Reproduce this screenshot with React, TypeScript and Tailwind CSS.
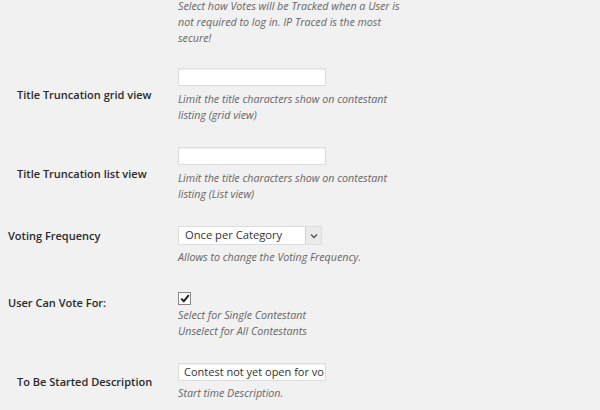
import React from 'react';

const font = { fontFamily: '"Open Sans", "Liberation Sans", sans-serif' };

const Desc = ({ children }: { children: React.ReactNode }) => (
  <p className="text-[10.7px] leading-[16px] italic text-[#666]">{children}</p>
);

const TextInput = ({ value = '' }: { value?: string }) => (
  <div className="w-[148px] h-[18px] bg-white border border-[#dddddd] shadow-[inset_0_1px_2px_rgba(0,0,0,0.07)] flex items-center pl-[5px] text-[11px] text-[#333] overflow-hidden whitespace-nowrap">
    {value}
  </div>
);

const App = () => {
  return (
    <div className="w-[600px] h-[410px] bg-[#f1f1f1] overflow-hidden" style={font}>
      {/* tracking description, cut off at the top */}
      <div className="pl-[178px] mt-[-2px]">
        <Desc>
          Select how Votes will be Tracked when a User is
          <br />
          not required to log in. IP Traced is the most
          <br />
          secure!
        </Desc>
      </div>

      {/* Title truncation grid */}
      <div className="flex items-center mt-[22px]">
        <div className="w-[178px] pl-[17px] text-[11px] font-semibold text-[#2a2a2a]">Title Truncation grid view</div>
        <div className="flex flex-col gap-[5px]">
          <TextInput />
          <Desc>
            Limit the title characters show on contestant
            <br />
            listing (grid view)
          </Desc>
        </div>
      </div>

      {/* Title truncation list */}
      <div className="flex items-center mt-[24px]">
        <div className="w-[178px] pl-[17px] text-[11px] font-semibold text-[#2a2a2a]">Title Truncation list view</div>
        <div className="flex flex-col gap-[5px]">
          <TextInput />
          <Desc>
            Limit the title characters show on contestant
            <br />
            listing (List view)
          </Desc>
        </div>
      </div>

      {/* Voting frequency */}
      <div className="flex items-start mt-[24px]">
        <div className="w-[178px] pl-[8px] pt-[2px] text-[11px] leading-[16px] font-semibold text-[#2a2a2a]">Voting Frequency</div>
        <div className="flex flex-col gap-[4px]">
          <div className="w-[144px] h-[19px] bg-white border border-[#dddddd] flex items-stretch">
            <span className="flex-1 flex items-center pl-[6px] text-[11.2px] text-[#333]">Once per Category</span>
            <span className="w-[16px] bg-[#eaeaea] border-l border-[#cfcfcf] flex items-center justify-center">
              <svg width="8" height="6" viewBox="0 0 8 6">
                <path d="M1 1.5 L4 4.5 L7 1.5" fill="none" stroke="#555" strokeWidth="1.4" />
              </svg>
            </span>
          </div>
          <Desc>Allows to change the Voting Frequency.</Desc>
        </div>
      </div>

      {/* User can vote for */}
      <div className="flex items-start mt-[27px]">
        <div className="w-[178px] pl-[8px] pt-[3px] text-[11px] leading-[16px] font-semibold text-[#2a2a2a]">User Can Vote For:</div>
        <div className="flex flex-col gap-[2px]">
          <div className="w-[13px] h-[13px] bg-white border border-[#888] flex items-center justify-center">
            <svg width="10" height="9" viewBox="0 0 10 9">
              <path d="M1.2 4.6 L3.8 7.2 L8.8 1.2" fill="none" stroke="#222" strokeWidth="2" />
            </svg>
          </div>
          <Desc>
            Select for Single Contestant
            <br />
            Unselect for All Contestants
          </Desc>
        </div>
      </div>

      {/* To be started description */}
      <div className="flex items-center mt-[24px]">
        <div className="w-[178px] pl-[17px] text-[11px] font-semibold text-[#2a2a2a]">To Be Started Description</div>
        <div className="flex flex-col gap-[4px]">
          <TextInput value="Contest not yet open for vo" />
          <Desc>Start time Description.</Desc>
        </div>
      </div>
    </div>
  );
};

export default App;
